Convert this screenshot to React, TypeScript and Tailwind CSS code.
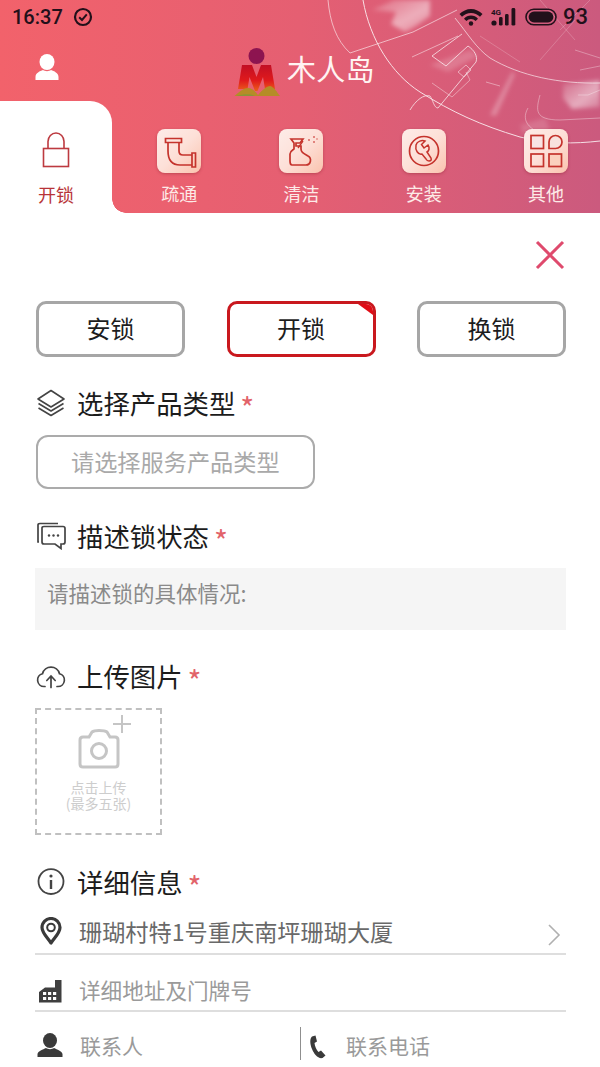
import React from "react";

const sans = "font-['Noto_Sans_CJK_SC',sans-serif]";

function Circuit() {
  return (
    <svg viewBox="0 0 600 213" className="absolute inset-0 w-[600px] h-[213px] pointer-events-none">
      <defs>
        <linearGradient id="haze" x1="0" y1="0" x2="1" y2="1">
          <stop offset="0" stopColor="#fff" stopOpacity="0.08" />
          <stop offset="0.6" stopColor="#fff" stopOpacity="0.5" />
          <stop offset="1" stopColor="#fff" stopOpacity="0.2" />
        </linearGradient>
        <filter id="soft" x="-20%" y="-20%" width="140%" height="140%">
          <feGaussianBlur stdDeviation="2" />
        </filter>
      </defs>
      <g filter="url(#soft)">
        <path d="M394 0 L430 0 L430 16 L416 26 L405 32 L391 24 L396 12 L372 10 Z" fill="url(#haze)" />
        <path d="M563 84 L600 80 L600 107 L572 109 L563 98 Z" fill="url(#haze)" />
        <path d="M490 115 L512 72 L515 74 L496 116 Z" fill="#fff" opacity="0.28" />
        <path d="M520 125 L545 118 L550 130 L524 136 Z" fill="#fff" opacity="0.14" />
        <path d="M430 65 L470 50 L478 56 L448 72 Z" fill="#fff" opacity="0.18" />
      </g>
      <g fill="none" stroke="#fff" strokeWidth="1" opacity="0.8">
        <path d="M363 0 C370 40 392 74 420 92 C452 112 480 125 520 137 C548 144 574 144 600 141" />
        <path d="M455 18 C468 34 476 48 490 58 C520 76 560 84 600 83" opacity="0.75" />
        <path d="M328 0 C330 22 336 40 350 53 L413 32 L457 10" opacity="0.7" />
        <path d="M410 110 C416 100 424 94 430 96 C433 100 434 108 438 108 L476 62 C478 56 474 50 468 46 L446 66 L432 56 L462 34" opacity="0.85" />
        <path d="M412 57 L458 36 M458 72 L466 65 L471 70 L464 77 Z" opacity="0.6" />
        <path d="M432 83 L452 97 L470 80 L466 72 M486 82 L500 86" opacity="0.5" />
        <path d="M540 95 C536 110 534 120 560 120 L600 118 M528 108 C520 122 530 132 556 138" opacity="0.45" />
        <path d="M575 50 L600 58 M580 70 L600 66 M578 95 L588 95 L600 90" opacity="0.4" />
        <path d="M480 36 L520 62 M540 60 L575 20 M540 0 L575 40 M590 0 L560 30" opacity="0.25" />
      </g>
    </svg>
  );
}

function StatusBar() {
  return (
    <div className="relative flex items-center h-[34px] pl-[12px] pr-[12px] text-[#22101a]">
      <span className="font-['Roboto',sans-serif] font-medium text-[20px] leading-[34px]">16:37</span>
      <svg width="20" height="20" viewBox="0 0 20 20" className="ml-[10px]">
        <circle cx="10" cy="10" r="8" fill="none" stroke="currentColor" strokeWidth="2.2" />
        <path d="M6.2 10.3 L9 13 L13.8 7.4" fill="none" stroke="currentColor" strokeWidth="2" />
      </svg>
      <div className="flex-1" />
      <svg width="24" height="18" viewBox="0 0 24 18">
        <path d="M0.5 6 A16 16 0 0 1 23.5 6 L21 8.7 A12.6 12.6 0 0 0 3 8.7 Z M5 10.7 A9.5 9.5 0 0 1 19 10.7 L16.6 13 A6.2 6.2 0 0 0 7.4 13 Z" fill="currentColor" />
        <circle cx="12" cy="15.5" r="2.2" fill="currentColor" />
      </svg>
      <svg width="27" height="20" viewBox="0 0 27 20" className="ml-[8px]">
        <circle cx="3" cy="16" r="2.6" fill="currentColor" />
        <rect x="8" y="10" width="3.6" height="8.6" rx="1.4" fill="currentColor" />
        <rect x="14" y="7" width="3.6" height="11.6" rx="1.4" fill="currentColor" />
        <rect x="20.5" y="1" width="3.8" height="17.6" rx="1.4" fill="currentColor" />
        <text x="0" y="8" fontSize="8" fontWeight="700" fontFamily="Roboto" fill="currentColor">4G</text>
      </svg>
      <svg width="33" height="18" viewBox="0 0 33 18" className="ml-[7px]">
        <rect x="1" y="1.2" width="30" height="15.6" rx="7.8" fill="none" stroke="currentColor" strokeWidth="1.6" />
        <rect x="3.6" y="3.6" width="24.8" height="10.8" rx="5.4" fill="currentColor" />
      </svg>
      <span className="ml-[5px] font-['Roboto',sans-serif] font-medium text-[22px] leading-[34px]">93</span>
    </div>
  );
}

function Logo() {
  return (
    <svg width="48" height="52" viewBox="0 0 48 52">
      <defs>
        <linearGradient id="mark" x1="0" y1="0" x2="0" y2="1">
          <stop offset="0" stopColor="#c20f24" />
          <stop offset="0.6" stopColor="#e01a1c" />
          <stop offset="1" stopColor="#ea5f1a" />
        </linearGradient>
      </defs>
      <circle cx="22.5" cy="12" r="8" fill="#8d1450" />
      <path d="M8 21 H18 L22.5 33 L27 21 H37 L41 45 H31 L29 33 L23.5 47 H21 L15.5 33 L13.5 45 H4 Z" fill="url(#mark)" />
      <path d="M0.5 52 C6 47 10 44 14 44 C18 44 22 48 24 51 C28 46 33 42 36 42 C40 43 43 48 46 52 Z" fill="#b58c27" />
      <path d="M2 52 C7 50.5 12 50 17 50.5 L21 52 Z" fill="#8c9436" />
    </svg>
  );
}

function PipeGlyph() {
  return (
    <svg width="44" height="44" viewBox="0 0 44 44" fill="none" stroke="#c5332c" strokeWidth="1.7">
      <path d="M8.5 9.5 H24.5 V13.5 H8.5 Z" />
      <path d="M11 13.5 V22 Q11 36 23 36 H35 M22 13.5 V22 Q22 26 26 26 H35" />
      <path d="M35 24 H38.5 V38 H35 Z" />
    </svg>
  );
}

function SprayGlyph() {
  return (
    <svg width="44" height="44" viewBox="0 0 44 44" fill="none" stroke="#c5332c" strokeWidth="1.7">
      <path d="M12 10 H24 L21 14 H17 V17 H22 V20 C22 23 24 24 29 27 C33 29 32 36 27 36 H13 C11 36 11 34 11 32 V25 C11 22 14 21 15 20 V14 Z" />
      <path d="M24 12 L19 19" strokeWidth="1.3" />
      <g fill="#d9655f" stroke="none">
        <circle cx="30" cy="11" r="1" />
        <circle cx="35" cy="8" r="1" />
        <circle cx="35" cy="13" r="1" />
        <circle cx="38" cy="10" r="0.8" />
      </g>
    </svg>
  );
}

function WrenchGlyph() {
  return (
    <svg width="44" height="44" viewBox="0 0 44 44" fill="none" stroke="#c5332c" strokeWidth="1.7">
      <circle cx="22" cy="22" r="14.5" />
      <path d="M14 16 C15 12 20 11 23 12 L19.5 15.5 L22 19 L26 16 C28 19 27 22 25 23 L29 29 Q30 32 27 32 Q25 32 24 30 L20 25 C16 26 13 21 14 16 Z" strokeWidth="1.5" />
    </svg>
  );
}

function GridGlyph() {
  return (
    <svg width="44" height="44" viewBox="0 0 44 44" fill="none" stroke="#c5332c" strokeWidth="1.7">
      <rect x="7" y="6.5" width="12.5" height="13" fill="#f8e4e4" />
      <path d="M25 19.5 V13 A6.5 6.5 0 1 1 31.5 19.5 Z" fill="#f8e2de" />
      <rect x="7" y="25" width="12.5" height="12.5" />
      <rect x="25" y="25" width="12.5" height="12.5" fill="#fbd0bd" />
    </svg>
  );
}

const tabs = [
  { label: "疏通", glyph: <PipeGlyph /> },
  { label: "清洁", glyph: <SprayGlyph /> },
  { label: "安装", glyph: <WrenchGlyph /> },
  { label: "其他", glyph: <GridGlyph /> },
];

function Header() {
  return (
    <header className="relative h-[213px] overflow-hidden bg-gradient-to-r from-[#f2626b] via-[#e55f72] to-[#cb5a7e]">
      <Circuit />
      <StatusBar />
      <div className="relative flex items-center h-[67px]">
        <div className="w-[94px] flex justify-center pb-[2px]">
          <svg width="24" height="26" viewBox="0 0 24 26" fill="#fff">
            <ellipse cx="12" cy="8" rx="7.5" ry="8" />
            <path d="M0.5 26 V23 C0.5 19 5 17 8 16 C10 17.5 14 17.5 16 16 C19 17 23.5 19 23.5 23 V26 Z" />
          </svg>
        </div>
        <div className="ml-[140px] mt-[4px]">
          <Logo />
        </div>
        <span className={`ml-[5px] text-[29px] leading-[36px] text-[#fff4f2] tracking-[0.3px] ${sans}`}>木人岛</span>
      </div>
      <div className="relative flex h-[112px]">
        <div className="relative shrink-0 w-[112px] bg-white rounded-tr-[22px] flex flex-col items-center pt-[31px]">
          <svg width="28" height="36" viewBox="0 0 28 36" fill="none" stroke="#bd3a40" strokeWidth="1.6">
            <path d="M6 17 V9.5 A8 8.5 0 0 1 22 9.5 V17" />
            <rect x="1.5" y="16.5" width="25" height="18" />
          </svg>
          <span className={`mt-[13px] text-[18px] leading-[26px] text-[#b83438] ${sans}`}>开锁</span>
          {/* concave corner joining the white tab to the page below */}
          <div className="absolute left-full bottom-0 w-[14px] h-[14px] bg-[radial-gradient(circle_at_100%_0,transparent_13.5px,#ffffff_14px)]" />
        </div>
        <div className="flex pl-[6px]">
          {tabs.map((t) => (
            <div key={t.label} className="shrink-0 w-[122.3px] flex flex-col items-center pt-[28px]">
              <div className="w-[44px] h-[44px] rounded-[8px] bg-gradient-to-br from-[#fdece8] via-[#fde0d8] to-[#fac3ae] shadow-[0_1px_3px_rgba(140,40,50,0.45)]">
                {t.glyph}
              </div>
              <span className={`mt-[7px] text-[18px] leading-[26px] text-[#fdeae7] ${sans}`}>{t.label}</span>
            </div>
          ))}
        </div>
      </div>
    </header>
  );
}

function LockChoice({ label, active }: { label: string; active?: boolean }) {
  return (
    <div
      className={`relative w-[149px] h-[56px] rounded-[10px] border-[3px] flex items-center justify-center overflow-hidden pb-[3px] text-[24px] text-[#1d1d1d] ${
        active ? "border-[#c9181e]" : "border-[#a6a6a6]"
      }`}
    >
      {label}
      {active && <div className="absolute top-0 right-0 w-0 h-0 border-l-[15px] border-l-transparent border-t-[11px] border-t-[#e00d16]" />}
    </div>
  );
}

function SectionTitle({ icon, title, top }: { icon: React.ReactNode; title: string; top: string }) {
  return (
    <div className={`flex items-center h-[36px] ${top}`}>
      <div className="w-[32px] h-[30px] flex items-center">{icon}</div>
      <span className="ml-[9px] text-[26.4px] leading-[36px] text-[#1c1c1c]">{title}</span>
      <span className="ml-[5px] text-[30px] leading-[36px] text-[#e2636a] pt-[8px]">*</span>
    </div>
  );
}

function Page() {
  return (
    <div className={`pl-[36px] pr-[34px] ${sans}`}>
      <div className="flex justify-end h-[88px] pt-[27px] pr-[1px]">
        <svg width="30" height="30" viewBox="0 0 30 30" fill="none" stroke="#df4a6d" strokeWidth="3">
          <path d="M2 2 L28 28 M28 2 L2 28" />
        </svg>
      </div>
      <div className="flex justify-between">
        <LockChoice label="安锁" />
        <LockChoice label="开锁" active />
        <LockChoice label="换锁" />
      </div>

      <SectionTitle
        top="mt-[28px]"
        title="选择产品类型"
        icon={
          <svg width="30" height="30" viewBox="0 0 30 30" fill="none" stroke="#444" strokeWidth="1.6" strokeLinejoin="round">
            <path d="M15 2.5 L28 11 L15 19 L2 11 Z" />
            <path d="M2.5 15.5 L15 23 L27.5 15.5" />
            <path d="M2.5 20 L15 27.5 L27.5 20" />
          </svg>
        }
      />
      <div className="mt-[14px] w-[279px] h-[54px] rounded-[12px] border-2 border-[#ababab] flex items-center pl-[33px] pb-[2px] text-[23.2px] text-[#a9a9a9]">
        请选择服务产品类型
      </div>

      <SectionTitle
        top="mt-[29px]"
        title="描述锁状态"
        icon={
          <svg width="30" height="28" viewBox="0 0 30 28" fill="none" stroke="#444" strokeWidth="1.7">
            <path d="M3 20 H2 V3 Q2 1.5 4 1.5 H22" />
            <path d="M6 6 Q6 4.5 8 4.5 H27 Q29 4.5 29 6.5 V20 Q29 22 27 22 H25 V26.5 L19 22 H8 Q6 22 6 20 Z" />
            <g fill="#444" stroke="none">
              <circle cx="13" cy="13.5" r="1.2" />
              <circle cx="17.5" cy="13.5" r="1.2" />
              <circle cx="22" cy="13.5" r="1.2" />
            </g>
          </svg>
        }
      />
      <div className="mt-[14px] -ml-[1px] h-[62px] bg-[#f5f5f5] pl-[12px] pt-[10px] text-[21.5px] leading-[30px] text-[#8a8a8a]">
        请描述锁的具体情况:
      </div>

      <SectionTitle
        top="mt-[28px]"
        title="上传图片"
        icon={
          <svg width="30" height="26" viewBox="0 0 30 26" fill="none" stroke="#444" strokeWidth="1.7" strokeLinecap="round">
            <path d="M9 23.5 H8 A6.5 6.5 0 0 1 6.5 10.7 A8.8 8.8 0 0 1 23.5 10.7 A6.5 6.5 0 0 1 22 23.5 H21" />
            <path d="M15 24.5 V13.5 M10.8 17.5 L15 13 L19.2 17.5" />
          </svg>
        }
      />
      <div className="mt-[14px] -ml-[1px] relative w-[127px] h-[127px] border-2 border-dashed border-[#c0c0c0] flex flex-col items-center pt-[19px]">
        <svg width="42" height="40" viewBox="0 0 42 40" fill="none" stroke="#c5c5c5" strokeWidth="3" className="mb-[10px]">
          <path d="M5 8 H11 L14 3 Q16 1.5 21 1.5 Q27 1.5 29 3 L32 8 H37 Q40 8 40 11 V35 Q40 38 37 38 H5 Q2 38 2 35 V11 Q2 8 5 8 Z" />
          <circle cx="21" cy="22" r="7.5" />
        </svg>
        {/* plus badge sitting over the camera's corner */}
        <svg width="18" height="18" viewBox="0 0 18 18" stroke="#c5c5c5" strokeWidth="2" className="absolute top-[5px] left-[76px]">
          <path d="M9 0 V18 M0 9 H18" />
        </svg>
        <span className="whitespace-pre-line text-center text-[14px] leading-[16px] text-[#cdcdcd]">{"点击上传\n(最多五张)"}</span>
      </div>

      <SectionTitle
        top="mt-[29px]"
        title="详细信息"
        icon={
          <svg width="30" height="30" viewBox="0 0 30 30" fill="none" stroke="#444" strokeWidth="1.8">
            <path d="M9 25.5 A12.5 12.5 0 1 1 21 25.5 Q15 28.5 9 25.5" />
            <circle cx="15" cy="9" r="1.6" fill="#444" stroke="none" />
            <path d="M15 13 V22" strokeWidth="2.4" />
          </svg>
        }
      />

      <div className="flex items-center h-[55px] pt-[9px] border-b-2 border-[#dedede] -ml-[1px]">
        <div className="w-[30px] flex justify-center pl-[1px]">
          <svg width="22" height="28" viewBox="0 0 22 28" fill="none">
            <path d="M11 26 C6 19 2 15.5 2 10.5 A9 9 0 0 1 20 10.5 C20 15.5 16 19 11 26 Z" stroke="#3a3a3a" strokeWidth="3.2" strokeLinejoin="round" />
            <circle cx="11" cy="10.5" r="3.8" stroke="#3a3a3a" strokeWidth="2" />
          </svg>
        </div>
        <span className="ml-[14px] flex-1 text-[23.2px] leading-[30px] text-[#696969]">珊瑚村特1号重庆南坪珊瑚大厦</span>
        <svg width="14" height="24" viewBox="0 0 14 24" fill="none" stroke="#b0b0b0" strokeWidth="1.6" className="mr-[5px] mt-[7px]">
          <path d="M2 2 L12 12 L2 22" />
        </svg>
      </div>

      <div className="flex items-center h-[57px] pt-[15px] border-b-2 border-[#dedede] -ml-[1px]">
        <div className="w-[30px] flex justify-center">
          <svg width="24" height="24" viewBox="0 0 24 24" className="mt-[1px]">
            <path d="M1 23.5 V13 L7 8.5 H17 V1 H23.5 V23.5 Z" fill="#3f3f3f" />
            <g fill="#fff">
              <rect x="5" y="13" width="3.2" height="3" />
              <rect x="10" y="13" width="3.2" height="3" />
              <rect x="15" y="13" width="3.2" height="3" />
              <rect x="5" y="18" width="3.2" height="3" />
              <rect x="10" y="18" width="3.2" height="3" />
              <rect x="15" y="18" width="3.2" height="3" />
            </g>
          </svg>
        </div>
        <span className="ml-[14px] text-[21.6px] leading-[30px] text-[#9a9a9a]">详细地址及门牌号</span>
      </div>

      <div className="flex h-[55px] -ml-[1px]">
        <div className="w-[265px] flex items-center pt-[11px]">
          <div className="w-[30px] flex justify-center">
            <svg width="26" height="24" viewBox="0 0 26 24" fill="#3a3a3a">
              <ellipse cx="13" cy="7.5" rx="7" ry="7.5" />
              <path d="M0.5 24 V21 C1 18 6 16.5 9 15 C11 16.5 15 16.5 17 15 C20 16.5 25 18 25.5 21 V24 Z" />
            </svg>
          </div>
          <span className="ml-[15px] text-[21px] leading-[30px] text-[#9a9a9a]">联系人</span>
        </div>
        <div className="w-[1px] h-[33px] mt-[15px] bg-[#8f8f8f]" />
        <div className="flex items-center pt-[11px]">
          <svg width="18" height="24" viewBox="0 0 18 24" fill="#3a3a3a" className="ml-[8px] mt-[4px]">
            <path d="M3 1.5 L6.5 0.5 L8 6.5 L5.5 8 C5.8 11 7.5 15 9.5 17 L12 15.5 L16.5 20.5 L13.5 23 C9 24 5 19 3 14 C1 9 0.5 4 3 1.5 Z" />
          </svg>
          <span className="ml-[19px] text-[21px] leading-[30px] text-[#9a9a9a]">联系电话</span>
        </div>
      </div>
    </div>
  );
}

export default function App() {
  return (
    <div className="w-[600px] h-[1067px] overflow-hidden bg-white">
      <Header />
      <Page />
    </div>
  );
}
